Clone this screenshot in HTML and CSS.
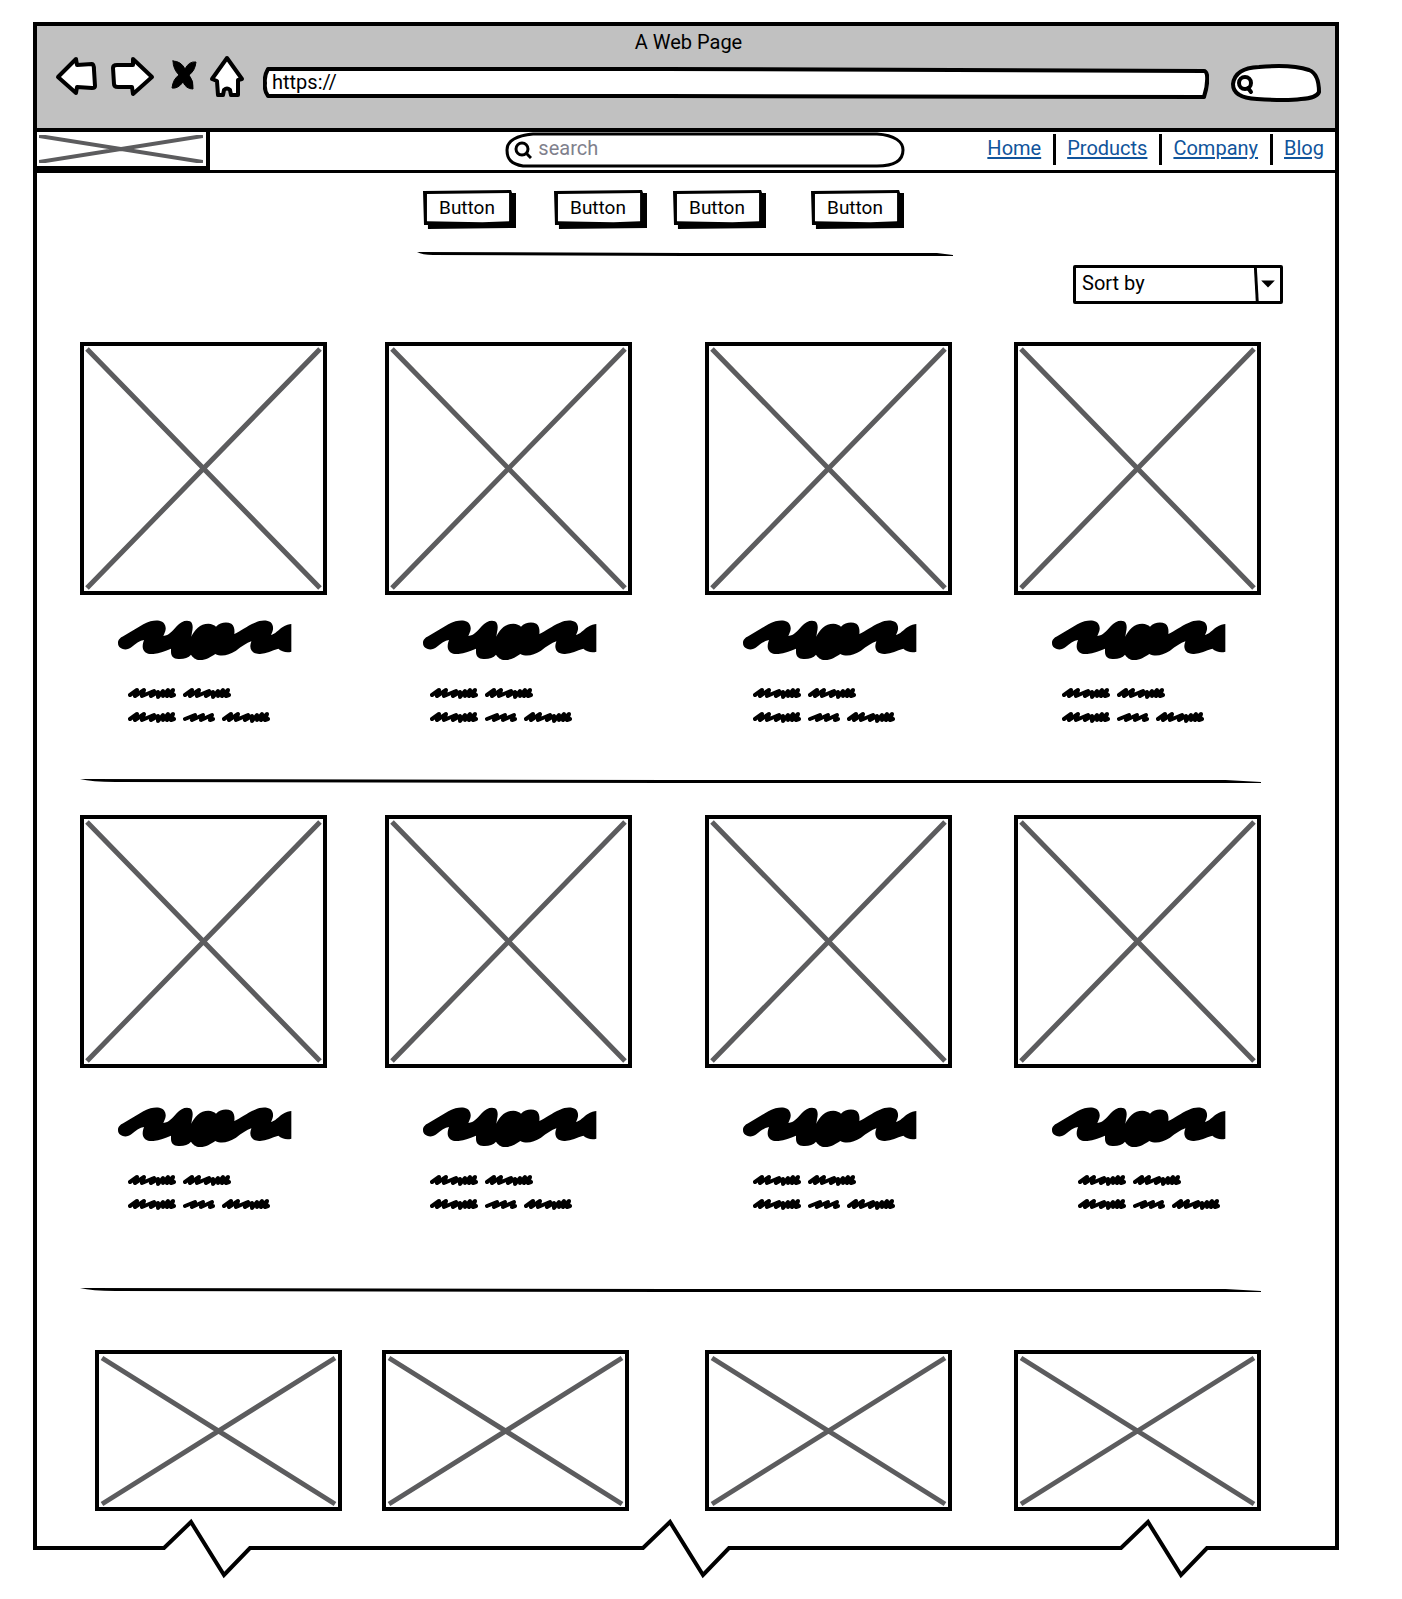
FILE: index.html
```html
<!DOCTYPE html>
<html lang="en">
<head>
<meta charset="utf-8">
<meta name="viewport" content="width=device-width, initial-scale=1">
<title>A Web Page</title>
<link rel="stylesheet" href="styles.css">
</head>
<body>
<!-- Shared sketch shapes -->
<svg class="defs" aria-hidden="true">
  <symbol id="title-scribble" viewBox="174 120 522 120">
    <path d="M174 188 C174 178 182 172 192 167 L250 133 C270 122 285 120 298 122 C314 125 320 140 316 153 Q313 161 310 168 C328 166 335 155 350 139 C362 125 378 119 390 124 C400 130 399 145 396 157 L394 170 C403 150 420 131 445 131 C455 131 463 135 468 140 C480 127 500 124 514 131 C524 139 524 150 523 162 C540 155 560 138 585 128 C600 121 620 119 632 127 C642 137 641 150 633 165 C645 163 655 150 667 142 C678 134 688 132 694 132 L694 215 C680 219 665 215 655 206 C635 212 620 220 600 222 C580 223 570 212 571 197 C572 190 574 186 574 184 C560 188 545 200 528 212 C505 226 485 231 466 222 C450 232 440 240 420 240 C407 240 398 232 393 224 C385 234 370 238 355 237 C340 237 333 228 333 216 L333 206 C315 213 300 219 280 222 C262 224 248 215 248 200 C248 192 250 186 252 180 C240 182 228 190 215 201 C205 210 190 210 182 204 C176 200 174 195 174 188Z"/>
  </symbol>
  <symbol id="word-long" viewBox="0 0 49 12">
    <path d="M2 8 L9 3 L7 9 L16 3 L14 9 L26 4 L23 9 L30 5 L30 10 L35 4 L35 9 L40 3 L39 9 L45 3 L43 9 L46 8 M25 6 L33 7 L40 8" fill="none" stroke="#000" stroke-width="4" stroke-linecap="round" stroke-linejoin="round"/>
  </symbol>
  <symbol id="word-short" viewBox="0 0 33 12">
    <path d="M2 8 L12 4 L9 9 L20 4 L18 9 L29 4 L27 9 L30 8" fill="none" stroke="#000" stroke-width="4" stroke-linecap="round" stroke-linejoin="round"/>
  </symbol>
  <symbol id="rule" viewBox="0 0 1000 5" preserveAspectRatio="none">
    <path d="M0 0 L500 1 L970 1 L1000 3 L1000 4 L970 4 L500 4 L30 3 Q10 3 0 0Z"/>
  </symbol>
  <symbol id="button-frame" viewBox="0 0 94 40" preserveAspectRatio="none">
    <path d="M0 1 L89 0 L90 3 L94 3 L94 39 L5 40 L5 36 L1 36Z"/>
    <path d="M4 4 L87 3 L87 32 L60 33 L4 32Z" fill="#fff"/>
  </symbol>
</svg>

<div class="browser">
  <header class="chrome">
    <div class="chrome-title">A Web Page</div>
    <div class="toolbar">
      <button class="tool" type="button" aria-label="Back">
        <svg width="42" height="42" viewBox="0 0 42 42"><path d="M2 21 L20 3 L21 9 L36 8 Q38 8 38 14 L39 30 Q39 32 36 32 L21 31 L20 37Z"/></svg>
      </button>
      <button class="tool" type="button" aria-label="Forward">
        <svg width="44" height="42" viewBox="0 0 44 42"><path d="M3 12 Q3 9 7 9 L23 9 L23 3 L42 21 L23 38 L22 31 L8 31 Q4 31 4 28Z"/></svg>
      </button>
      <button class="tool tool-stop" type="button" aria-label="Stop">
        <svg width="26" height="42" viewBox="0 0 26 42"><path class="solid" d="M2 4 Q10 4 14 12 Q18 4 25 5 Q24 14 18 18 Q23 24 22 32 Q15 32 12 25 Q7 32 1 31 Q2 22 8 18 Q2 12 2 4Z"/></svg>
      </button>
      <button class="tool" type="button" aria-label="Home">
        <svg width="34" height="42" viewBox="0 0 34 42"><path d="M18 2 L3 23 L8 25 L9 39 L14 39 L15 34 Q18 31 21 34 L22 39 L29 39 L29 24 L33 23Z"/></svg>
      </button>
      <label class="address">
        <svg class="frame" viewBox="0 0 944 32" preserveAspectRatio="none" aria-hidden="true"><path d="M5 2 Q1 9 2 16 Q1 24 5 29 L400 29 L939 30 Q943 18 942 8 Q941 4 939 4 L400 2Z"/></svg>
        <input type="text" value="https://" aria-label="Address">
      </label>
      <label class="mini-search">
        <svg class="frame" viewBox="0 0 90 38" preserveAspectRatio="none" aria-hidden="true"><path d="M2 20 Q4 4 28 3 Q60 0 78 6 Q88 10 88 28 Q86 34 70 35 Q56 37 26 35 Q2 34 2 20Z"/><circle cx="14" cy="19" r="6"/><path d="M17 24 L20 28"/></svg>
        <input type="search" aria-label="Browser search">
      </label>
    </div>
  </header>

  <nav class="site-bar">
    <a class="logo" href="#" aria-label="Logo">
      <svg viewBox="0 0 164 28" preserveAspectRatio="none" aria-hidden="true"><path d="M0 1 L164 27 M0 27 L164 1"/></svg>
    </a>
    <label class="search">
      <svg class="frame" viewBox="0 0 400 36" preserveAspectRatio="none" aria-hidden="true"><path d="M28 2 L372 2 C390 3 398 10 398 18 C398 28 390 34 372 34 L18 34 C6 32 2 27 2 18 C2 10 8 4 28 2Z"/></svg>
      <svg class="lens" width="18" height="18" viewBox="0 0 18 18" aria-hidden="true"><circle cx="8" cy="8" r="6"/><path d="M12 12 L17 17"/></svg>
      <input type="search" placeholder="search" aria-label="Search">
    </label>
    <div class="links">
      <a href="#">Home</a>
      <a href="#">Products</a>
      <a href="#">Company</a>
      <a href="#">Blog</a>
    </div>
  </nav>

  <main>
    <div class="filters">
      <button class="filter" type="button"><svg class="frame" aria-hidden="true"><use href="#button-frame"/></svg><span>Button</span></button>
      <button class="filter" type="button"><svg class="frame" aria-hidden="true"><use href="#button-frame"/></svg><span>Button</span></button>
      <button class="filter" type="button"><svg class="frame" aria-hidden="true"><use href="#button-frame"/></svg><span>Button</span></button>
      <button class="filter" type="button"><svg class="frame" aria-hidden="true"><use href="#button-frame"/></svg><span>Button</span></button>
    </div>
    <svg class="rule rule-short" aria-hidden="true"><use href="#rule"/></svg>

    <div class="sort">
      <select aria-label="Sort by"><option>Sort by</option></select>
      <svg class="sort-arrow" width="29" height="40" viewBox="0 0 29 40" aria-hidden="true"><path d="M1 2 L3 38" fill="none" stroke="#000" stroke-width="3"/><path d="M7 16 L21 16 L14 23Z"/></svg>
    </div>

    <section class="products">
      <article class="card"><svg class="picture" viewBox="0 0 239 245" preserveAspectRatio="none"><path d="M3 3 L236 242 M236 3 L3 242"/></svg><svg class="name"><use href="#title-scribble"/></svg><div class="words"><svg class="long"><use href="#word-long"/></svg><svg class="long"><use href="#word-long"/></svg></div><div class="words"><svg class="long"><use href="#word-long"/></svg><svg class="short"><use href="#word-short"/></svg><svg class="long"><use href="#word-long"/></svg></div></article>
      <article class="card"><svg class="picture" viewBox="0 0 239 245" preserveAspectRatio="none"><path d="M3 3 L236 242 M236 3 L3 242"/></svg><svg class="name"><use href="#title-scribble"/></svg><div class="words"><svg class="long"><use href="#word-long"/></svg><svg class="long"><use href="#word-long"/></svg></div><div class="words"><svg class="long"><use href="#word-long"/></svg><svg class="short"><use href="#word-short"/></svg><svg class="long"><use href="#word-long"/></svg></div></article>
      <article class="card"><svg class="picture" viewBox="0 0 239 245" preserveAspectRatio="none"><path d="M3 3 L236 242 M236 3 L3 242"/></svg><svg class="name"><use href="#title-scribble"/></svg><div class="words"><svg class="long"><use href="#word-long"/></svg><svg class="long"><use href="#word-long"/></svg></div><div class="words"><svg class="long"><use href="#word-long"/></svg><svg class="short"><use href="#word-short"/></svg><svg class="long"><use href="#word-long"/></svg></div></article>
      <article class="card"><svg class="picture" viewBox="0 0 239 245" preserveAspectRatio="none"><path d="M3 3 L236 242 M236 3 L3 242"/></svg><svg class="name"><use href="#title-scribble"/></svg><div class="words"><svg class="long"><use href="#word-long"/></svg><svg class="long"><use href="#word-long"/></svg></div><div class="words"><svg class="long"><use href="#word-long"/></svg><svg class="short"><use href="#word-short"/></svg><svg class="long"><use href="#word-long"/></svg></div></article>
    </section>
    <svg class="rule" aria-hidden="true"><use href="#rule"/></svg>

    <section class="products products-roomy">
      <article class="card"><svg class="picture" viewBox="0 0 239 245" preserveAspectRatio="none"><path d="M3 3 L236 242 M236 3 L3 242"/></svg><svg class="name"><use href="#title-scribble"/></svg><div class="words"><svg class="long"><use href="#word-long"/></svg><svg class="long"><use href="#word-long"/></svg></div><div class="words"><svg class="long"><use href="#word-long"/></svg><svg class="short"><use href="#word-short"/></svg><svg class="long"><use href="#word-long"/></svg></div></article>
      <article class="card"><svg class="picture" viewBox="0 0 239 245" preserveAspectRatio="none"><path d="M3 3 L236 242 M236 3 L3 242"/></svg><svg class="name"><use href="#title-scribble"/></svg><div class="words"><svg class="long"><use href="#word-long"/></svg><svg class="long"><use href="#word-long"/></svg></div><div class="words"><svg class="long"><use href="#word-long"/></svg><svg class="short"><use href="#word-short"/></svg><svg class="long"><use href="#word-long"/></svg></div></article>
      <article class="card"><svg class="picture" viewBox="0 0 239 245" preserveAspectRatio="none"><path d="M3 3 L236 242 M236 3 L3 242"/></svg><svg class="name"><use href="#title-scribble"/></svg><div class="words"><svg class="long"><use href="#word-long"/></svg><svg class="long"><use href="#word-long"/></svg></div><div class="words"><svg class="long"><use href="#word-long"/></svg><svg class="short"><use href="#word-short"/></svg><svg class="long"><use href="#word-long"/></svg></div></article>
      <article class="card card-indented"><svg class="picture" viewBox="0 0 239 245" preserveAspectRatio="none"><path d="M3 3 L236 242 M236 3 L3 242"/></svg><svg class="name"><use href="#title-scribble"/></svg><div class="words"><svg class="long"><use href="#word-long"/></svg><svg class="long"><use href="#word-long"/></svg></div><div class="words"><svg class="long"><use href="#word-long"/></svg><svg class="short"><use href="#word-short"/></svg><svg class="long"><use href="#word-long"/></svg></div></article>
    </section>
    <svg class="rule" aria-hidden="true"><use href="#rule"/></svg>

    <section class="products products-wide">
      <svg class="picture" viewBox="0 0 239 153" preserveAspectRatio="none"><path d="M3 4 L236 150 M236 4 L3 150"/></svg>
      <svg class="picture" viewBox="0 0 239 153" preserveAspectRatio="none"><path d="M3 4 L236 150 M236 4 L3 150"/></svg>
      <svg class="picture" viewBox="0 0 239 153" preserveAspectRatio="none"><path d="M3 4 L236 150 M236 4 L3 150"/></svg>
      <svg class="picture" viewBox="0 0 239 153" preserveAspectRatio="none"><path d="M3 4 L236 150 M236 4 L3 150"/></svg>
    </section>
  </main>
</div>
<svg class="torn-edge" viewBox="0 0 1306 60" preserveAspectRatio="none" aria-hidden="true">
  <path d="M2 0 V30 H131 L158 4 L191 57 L217 30 H610 L637 4 L670 57 L696 30 H1088 L1115 4 L1148 57 L1174 30 H1304 V0"/>
</svg>
</body>
</html>
```
FILE: styles.css
```css
* { box-sizing: border-box; }

body {
  margin: 0;
  padding: 22px 63px 20px 33px;
  background: #fff;
  color: #000;
  font: 20px/24px Roboto, "Liberation Sans", sans-serif;
}

input, select, button {
  font: inherit;
  color: inherit;
  border: 0;
  padding: 0;
  margin: 0;
  background: none;
  outline: 0;
  appearance: none;
}

svg { display: block; }
.defs { position: absolute; width: 0; height: 0; }

.frame {
  position: absolute;
  inset: 0;
  width: 100%;
  height: 100%;
}

.browser {
  border: 4px solid #000;
  border-bottom: 0;
}

/* Browser chrome */
.chrome {
  height: 106px;
  padding: 4px 14px 0 19px;
  background: #c1c1c1;
  border-bottom: 4px solid #000;
}
.chrome-title { text-align: center; }
.toolbar { display: flex; align-items: flex-start; }
.tool { margin-right: 12px; padding-top: 2px; }
.tool-stop { margin: 1px 12px 0 5px; }
.tool svg { overflow: visible; }
.tool path, .address path, .mini-search path, .mini-search circle {
  fill: #fff;
  stroke: #000;
  stroke-width: 4px;
  stroke-linejoin: round;
  stroke-linecap: round;
}
.tool .solid { fill: #000; stroke-width: 1px; }
.address {
  position: relative;
  flex: 1;
  height: 32px;
  margin: 13px 22px 0 8px;
}
.address input {
  position: relative;
  width: 100%;
  height: 30px;
  padding-left: 9px;
}
.mini-search {
  position: relative;
  width: 90px;
  height: 38px;
  margin-top: 10px;
}
.mini-search input {
  position: relative;
  width: 100%;
  height: 100%;
  padding: 0 10px 0 28px;
}

/* Site header */
.site-bar {
  display: flex;
  align-items: flex-start;
  height: 41px;
  border-bottom: 3px solid #000;
}
.logo {
  width: 173px;
  height: 38px;
  padding: 3px 3px 3px 2px;
  border: solid #000;
  border-width: 0 4px 4px 0;
}
.logo svg { width: 100%; height: 100%; }
.logo path {
  fill: none;
  stroke: #5c5c5e;
  stroke-width: 4px;
}
.search {
  position: relative;
  display: flex;
  width: 400px;
  height: 36px;
  margin-left: auto;
}
.search path, .search circle {
  fill: none;
  stroke: #000;
  stroke-width: 3px;
}
.lens {
  position: relative;
  margin: 9px 6px 0 9px;
}
.search input {
  position: relative;
  flex: 1;
  height: 32px;
}
.search input::placeholder { color: #7f808c; opacity: 1; }
.links {
  display: flex;
  margin: 2px 11px 0 82px;
}
.links a {
  height: 31px;
  line-height: 28px;
  color: #10549b;
  text-decoration-thickness: 2px;
  text-underline-offset: 2px;
}
.links a + a {
  margin-left: 12px;
  padding-left: 11px;
  border-left: 3px solid #000;
}

/* Page body */
main { padding: 17px 74px 7px 43px; }
.filters {
  display: flex;
  margin-left: 343px;
  font-size: 19px;
}
.filter {
  position: relative;
  width: 93px;
  height: 39px;
}
.filter span {
  position: relative;
  display: block;
  padding: 0 5px 4px 0;
}
.filter:nth-child(2) { margin-left: 38px; }
.filter:nth-child(3) { margin-left: 26px; }
.filter:nth-child(4) { margin-left: 45px; }

.rule { width: 100%; height: 5px; }
.rule-short {
  width: 536px;
  margin: 23px 0 0 337px;
}

.sort {
  position: relative;
  width: 210px;
  height: 39px;
  margin: 8px -22px 38px auto;
}
.sort select {
  width: 100%;
  height: 100%;
  padding: 0 36px 3px 6px;
  border: 3px solid #000;
  border-radius: 2px;
}
.sort-arrow {
  position: absolute;
  top: 0;
  right: 0;
  height: 100%;
  pointer-events: none;
}

.products {
  display: grid;
  grid-template-columns: 305fr 321fr 309fr 247fr;
  padding-bottom: 44px;
}
.picture {
  width: 247px;
  height: 253px;
  border: 4px solid #000;
}
.picture path {
  fill: none;
  stroke: #5c5c5e;
  stroke-width: 5px;
}
.name {
  width: 174px;
  height: 40px;
  margin: 25px 0 27px 38px;
}
.words {
  display: flex;
  gap: 6px;
  height: 24px;
  padding-left: 48px;
}
.card:nth-child(2) .words { padding-left: 45px; }
.words .long { width: 49px; height: 12px; }
.words .short { width: 33px; height: 12px; }
.rule + .products { padding-top: 31px; }
.products-roomy { padding-bottom: 66px; }
.products-roomy .name { margin-top: 39px; }
.card-indented .words { padding-left: 64px; }
.rule + .products-wide {
  grid-template-columns: 287fr 324fr 309fr 247fr;
  padding: 57px 0 0 15px;
}
.products-wide .picture { height: 161px; }

.torn-edge { width: 100%; height: 60px; overflow: visible; }
.torn-edge path {
  fill: none;
  stroke: #000;
  stroke-width: 4px;
}
```
